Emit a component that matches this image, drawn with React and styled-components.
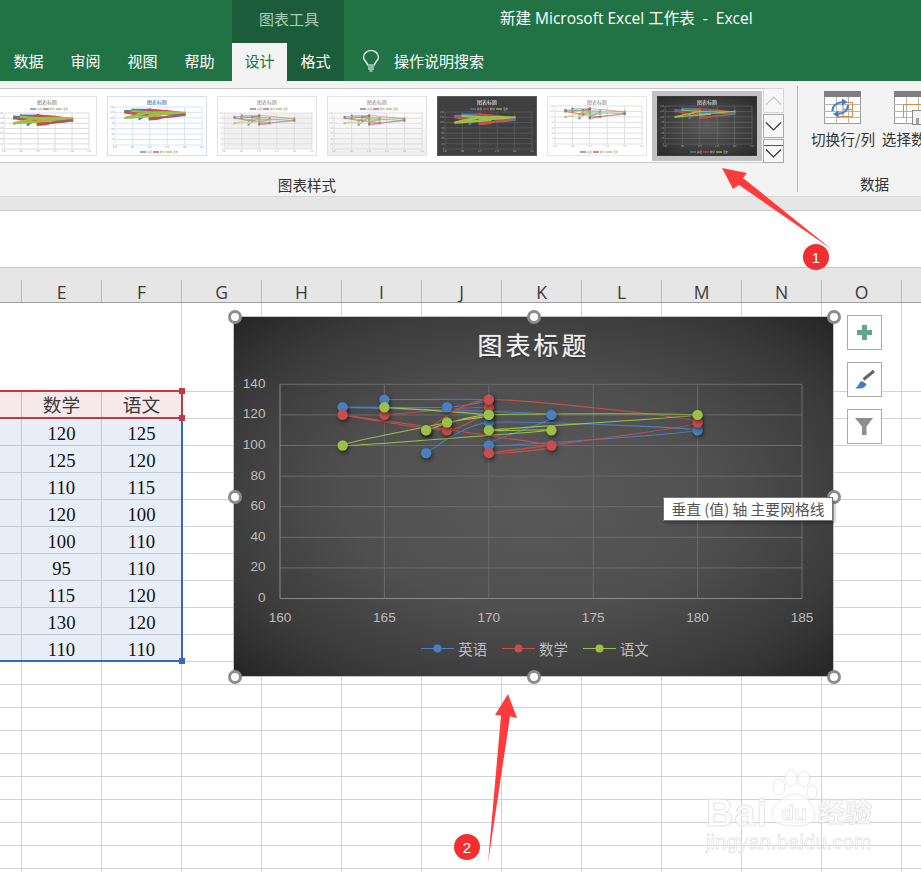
import React from 'react';
import styled, { createGlobalStyle } from 'styled-components';

const UI = '"Noto Sans CJK SC", "Noto Sans", sans-serif';
const LATIN_UI = '"Open Sans", "Noto Sans CJK SC", sans-serif';
const BLUE = '#4a7fc1';
const RED = '#c74e4b';
const GREEN = '#9cbf46';

const Global = createGlobalStyle`
  html, body { margin: 0; padding: 0; background: #fff; overflow: hidden; }
  * { box-sizing: border-box; }
`;

const Page = styled.div`
  position: relative; width: 921px; height: 872px; overflow: hidden;
  font-family: ${UI}; background: #fff;
`;

/* ---------- title bar and tabs ---------- */
const TitleBar = styled.header`
  display: flex; height: 43px; background: #217346; color: #fff;
`;
const TitleSpacer = styled.div`width: 232px;`;
const ContextTitle = styled.div`
  width: 112px; background: #1d5c3a; color: #a9cdb8; font-size: 15px; padding: 0 0 7px 2px;
  display: flex; align-items: center; justify-content: center;
`;
const DocTitle = styled.div`
  margin-left: 156px; font-size: 15.5px; line-height: 36px; white-space: pre;
  font-family: ${LATIN_UI};
`;
const TabBar = styled.nav`
  display: flex; height: 38px; background: #217346; align-items: stretch;
`;
const Tab = styled.div`
  width: ${p => p.$w}px; display: flex; align-items: center; justify-content: center; padding-bottom: 4px;
  font-size: 15px; color: ${p => (p.$active ? '#217346' : '#fff')};
  background: ${p => (p.$active ? '#f3f3f3' : p.$dark ? '#1d5c3a' : 'transparent')};
`;
const TabGap = styled.div`width: ${p => p.$w}px;`;
const Search = styled.div`
  display: flex; align-items: center; gap: 14px; margin-left: 18px; color: #fff; font-size: 15px;
  padding-bottom: 3px;
`;

/* ---------- ribbon ---------- */
const Ribbon = styled.section`
  display: flex; height: 116px; background: #f3f3f3; border-bottom: 1px solid #d6d6d6; overflow: hidden;
`;
const GalleryGroup = styled.div`
  flex: none; width: 980px; margin-left: -183px; padding: 7px 13px 0 0;
  display: flex; flex-direction: column; align-items: flex-end; position: relative;
`;
const GroupLabel = styled.div`
  font-size: 14.6px; color: #333; text-align: center; line-height: 20px;
`;
const GalleryLabel = styled(GroupLabel)`
  align-self: stretch; margin: 12px -13px 0 0;
`;
const GalleryRow = styled.div`
  display: flex; height: 75px;
`;
const Gallery = styled.div`
  display: flex; align-items: center; height: 75px; background: #fff;
  border: 1px solid #c8c8c8; border-right: none; padding-right: 1px; margin-left: -1px;
`;
const ThumbSlot = styled.div`
  width: 110px; height: 70px; padding: 5px; background: ${p => (p.$selected ? '#c2c2c2' : 'transparent')};
`;
const ThumbFrame = styled.div`
  width: 100px; height: 60px; overflow: hidden;
  border: 1px solid ${p => p.$border};
  background: ${p => p.$bg};
`;
const ThumbSvg = styled.svg`
  display: block; filter: blur(0.6px);
`;
const Scroller = styled.div`
  display: flex; flex-direction: column; width: 21px; height: 75px; gap: 1px;
`;
const ScrollBtn = styled.div`
  height: ${p => p.$h}px; border: 1px solid ${p => (p.$off ? '#d6d6d6' : '#a8a8a8')};
  background: #f7f7f7; display: flex; align-items: center; justify-content: center;
  flex-direction: column; gap: 3px;
`;
const MoreBar = styled.div`width: 19px; height: 1px; background: #555;`;

const DataGroup = styled.div`
  flex: none; width: 154px; margin: 5px 0 4px; border-left: 1px solid #b8b8b8;
  display: flex; flex-direction: column;
`;
const DataButtons = styled.div`display: flex; padding: 5px 0 0 12px; gap: 5px;`;
const DataButton = styled.div`
  width: ${p => p.$w}px; display: flex; flex-direction: column; align-items: center; gap: 3px;
  font-size: 14.6px; color: #333; white-space: nowrap; line-height: 22px;
`;
const IconSlot = styled.div`height: 34px; margin-left: ${p => p.$ml || 0}px;`;
const DataLabel = styled(GroupLabel)`margin-top: auto; margin-bottom: -2px;`;

const Band = styled.div`
  height: 14px; background: #e6e6e6; border-bottom: 1px solid #c9c9c9;
`;
const FormulaBar = styled.div`height: 56px; background: #fff;`;

/* ---------- sheet ---------- */
const ColHeader = styled.div`
  display: flex; align-items: flex-end; height: 36px; background: #e6e6e6;
  border-top: 1px solid #c6c6c6; border-bottom: 1px solid #9d9d9d;
`;
const ColCell = styled.div`
  flex: none; width: ${p => p.$w}px; height: 22px; border-right: 1px solid #b9b9b9;
  display: flex; align-items: center; justify-content: center; padding-top: 1px;
  font: 400 17.5px "Open Sans", sans-serif; color: #3a3a3a;
`;
const Sheet = styled.div`position: relative;`;
const Row = styled.div`
  display: flex; height: ${p => p.$h}px;
`;
const Cell = styled.div`
  flex: none; width: ${p => p.$w}px; height: 100%; padding-top: ${p => (p.$fill ? 3 : 0)}px;
  border-right: 1px solid ${p => (p.$fill ? '#c3c9d3' : '#d2d2d2')};
  border-bottom: 1px solid ${p => (p.$fill ? '#c3c9d3' : '#d2d2d2')};
  background: ${p => p.$fill || '#fff'};
  display: flex; align-items: center; justify-content: center; overflow: hidden;
  font: 18.7px "Liberation Serif", "Noto Sans CJK SC", serif; color: #111;
`;
const HeadCell = styled(Cell)`
  color: #3a3a3a; border-color: #cdbdbd; padding-top: 0; padding-bottom: 4px;
`;
const ClippedHead = styled(HeadCell)`
  justify-content: flex-end; padding-right: 21px; white-space: nowrap;
`;
const Merged = styled.div`
  flex: none; width: ${p => p.$w}px; height: 100%;
  border-right: 1px solid #d2d2d2; border-bottom: 1px solid #d2d2d2; background: #fff;
`;
const RangeLine = styled.div`
  position: absolute; background: ${p => p.$c};
  left: ${p => p.$x}px; top: ${p => p.$y}px; width: ${p => p.$w}px; height: ${p => p.$h}px;
`;
const RangeHandle = styled.div`
  position: absolute; width: 6px; height: 6px; background: ${p => p.$c};
  left: 179px; top: ${p => p.$y}px;
`;

/* ---------- chart ---------- */
const Chart = styled.div`
  position: absolute; left: 233px; top: 13px; width: 601px; height: 361px;
  border: 1px solid #c4c4c4; display: flex; flex-direction: column;
  background: radial-gradient(ellipse at center, #5a5a5a 0%, #4f4f4f 45%, #3a3a3a 78%, #252525 100%);
`;
const ChartTitle = styled.div`
  height: 60px; display: flex; align-items: center; justify-content: center; padding: 0 0 6px 0;
  font-size: 25px; letter-spacing: 3px; color: #f0f0f0;
  text-shadow: 0 1px 2px rgba(0,0,0,.6), 0 0 1px #fff;
`;
const Plot = styled.svg`display: block; flex: none;`;
const Legend = styled.div`
  height: 28px; display: flex; align-items: center; justify-content: center; gap: 15px;
  font-size: 14.4px; color: #bdbdbd; padding: 0 0 2px 3px;
`;
const LegendItem = styled.div`display: flex; align-items: center; gap: 4px;`;
const Marker = styled.circle`
  filter: drop-shadow(1px 2px 2px rgba(0,0,0,.55));
`;
const AxisText = styled.text`
  font: 13.6px "Liberation Sans", sans-serif; fill: #bdbdbd;
`;
const Handle = styled.div`
  position: absolute; width: 14px; height: 14px; border-radius: 50%;
  background: #fff; border: 3px solid #8c8c8c;
  left: ${p => p.$x - 7}px; top: ${p => p.$y - 303 - 7}px;
`;
const SideButtons = styled.div`
  position: absolute; left: 847px; top: 12px; display: flex; flex-direction: column; gap: 12px;
`;
const SideButton = styled.div`
  width: 35px; height: 35px; background: #fff; border: 1px solid #ababab;
  display: flex; align-items: center; justify-content: center;
`;
const Tooltip = styled.div`
  position: absolute; left: 663px; top: 194px; width: 170px; height: 24px; padding-bottom: 2px;
  background: #fff; border: 1px solid #767676; box-shadow: 2px 2px 3px rgba(0,0,0,.3);
  font-size: 14.8px; color: #555; display: flex; align-items: center; justify-content: center;
  white-space: nowrap;
`;

/* ---------- overlays ---------- */
const Annotations = styled.svg`
  position: absolute; left: 0; top: 0; pointer-events: none;
`;
const BadgeText = styled.text`
  font: 15px "Liberation Sans", sans-serif; fill: #fff; text-anchor: middle;
`;
const Watermark = styled.div`
  position: absolute; left: 706px; top: 770px; width: 166px; display: flex; flex-direction: column;
  align-items: stretch; opacity: .72;
`;
const MarkRow = styled.div`display: flex; align-items: flex-end; height: 58px;`;
const MarkText = styled.span`
  font: 700 ${p => p.$s}px/30px "Liberation Sans", "Noto Sans CJK SC", sans-serif;
  color: #fff; -webkit-text-stroke: 1px #dadada; white-space: nowrap; letter-spacing: ${p => p.$ls || 0}px;
`;
const MarkDomain = styled.div`
  font: 400 20.5px/24px "Liberation Sans", sans-serif; color: #fff; -webkit-text-stroke: 0.8px #dadada;
  white-space: nowrap; margin-top: 2px;
`;

/* ---------- data ---------- */
const XS = [165, 170, 168, 163, 173, 170, 180, 170, 167];
const SERIES = [
  { name: '英语', color: BLUE, ys: [130, 130, 125, 125, 120, 100, 110, 115, 95] },
  { name: '数学', color: RED, ys: [120, 125, 110, 120, 100, 95, 115, 130, 110] },
  { name: '语文', color: GREEN, ys: [125, 120, 115, 100, 110, 110, 120, 120, 110] },
];
const TABLE = SERIES[1].ys.map((m, i) => [m, SERIES[2].ys[i]]);

function spline(pts) {
  const K = 1 / 10;
  let d = `M${pts[0][0]} ${pts[0][1]}`;
  for (let i = 0; i < pts.length - 1; i++) {
    const p0 = pts[Math.max(i - 1, 0)], p1 = pts[i], p2 = pts[i + 1], p3 = pts[Math.min(i + 2, pts.length - 1)];
    d += `C${p1[0] + (p2[0] - p0[0]) * K} ${p1[1] + (p2[1] - p0[1]) * K} ${p2[0] - (p3[0] - p1[0]) * K} ${p2[1] - (p3[1] - p1[1]) * K} ${p2[0]} ${p2[1]}`;
  }
  return d;
}

const THUMBS = [
  { bg: '#fff', border: '#e4e4e4', title: '#777', legend: 'top', plot: [7, 17, 92, 53], grid: '#dcdcdc', gw: 1, lw: 2.2, ms: 2.4, mo: 1, axis: '#999' },
  { bg: '#fff', border: '#d0e0f4', title: '#2f5f9e', legend: 'bottom', plot: [8, 11, 95, 49], grid: '#d5e4f6', gw: 1, lw: 2, ms: 2, mo: 1, axis: '#6d93c8' },
  { bg: '#fff', border: '#e2e2e2', title: '#8a8a8a', legend: 'top', plot: [7, 17, 95, 53], grid: '#dcdcdc', gw: .8, lw: .6, ms: 2, mo: .75, plotBg: '#f0f0f0', axis: '#aaa' },
  { bg: 'linear-gradient(#fff,#efefef)', border: '#e2e2e2', title: '#8a8a8a', legend: 'top', plot: [7, 17, 95, 53], grid: '#dcdcdc', gw: .9, lw: .6, ms: 2, mo: .8, axis: '#aaa' },
  { bg: '#404040', border: '#5a5a5a', title: '#e8e8e8', legend: 'top', plot: [8, 16, 95, 53], grid: '#5f5f5f', gw: .7, lw: 2.2, ms: 2, mo: 1, axis: '#aaa' },
  { bg: '#fff', border: '#e6e6e6', title: '#888', legend: 'bottom', plot: [8, 10, 95, 48], grid: '#e0e0e0', gw: 1, lw: .6, ms: 2.2, mo: .85, axis: '#aaa' },
  { bg: 'radial-gradient(ellipse at center,#5a5a5a,#2a2a2a)', border: '#3a3a3a', title: '#e8e8e8', legend: 'bottom', plot: [8, 10, 95, 48], grid: '#777', gw: .5, lw: 1.2, ms: 1.8, mo: 1, axis: '#aaa' },
];

function ThumbChart({ v }) {
  const [x0, y0, x1, y1] = v.plot;
  const sx = x => x0 + ((x - 160) / 25) * (x1 - x0);
  const sy = y => y1 - (y / 140) * (y1 - y0);
  const legendY = v.legend === 'top' ? 13 : 56;
  const isDark = v.title === '#e8e8e8';
  return (
    <ThumbFrame $bg={v.bg} $border={v.border}>
      <ThumbSvg width="98" height="58" viewBox="1 1 98 58">
        <text x="50" y="8" fontSize="5" fill={v.title} textAnchor="middle" fontFamily={UI}>图表标题</text>
        {SERIES.map((s, i) => (
          <g key={s.name}>
            <line x1={33 + i * 13} x2={39 + i * 13} y1={legendY} y2={legendY} stroke={s.color} strokeWidth="1.3" />
            <text x={40 + i * 13} y={legendY + 1} fontSize="2.6" fill={isDark ? '#ccc' : '#888'} fontFamily={UI}>{s.name}</text>
          </g>
        ))}
        {v.plotBg && <rect x={x0} y={y0} width={x1 - x0} height={y1 - y0} fill={v.plotBg} />}
        {[0, 20, 40, 60, 80, 100, 120, 140].map(t => (
          <g key={t}>
            <line x1={x0} x2={x1} y1={sy(t)} y2={sy(t)} stroke={v.grid} strokeWidth={v.gw} />
            <text x={x0 - 1} y={sy(t) + .8} fontSize="2.2" textAnchor="end" fill={v.axis}>{t}</text>
          </g>
        ))}
        {[160, 165, 170, 175, 180, 185].map(t => (
          <g key={t}>
            <line x1={sx(t)} x2={sx(t)} y1={y0} y2={y1} stroke={v.grid} strokeWidth={v.gw} />
            <text x={sx(t)} y={y1 + 3.4} fontSize="2.2" textAnchor="middle" fill={v.axis}>{t}</text>
          </g>
        ))}
        {SERIES.map(s => (
          <g key={s.name} opacity={v.mo}>
            <path d={spline(XS.map((x, i) => [sx(x), sy(s.ys[i])]))} fill="none" stroke={s.color} strokeWidth={v.lw} />
            {XS.map((x, i) => (
              <rect key={i} x={sx(x) - v.ms / 2} y={sy(s.ys[i]) - v.ms / 2} width={v.ms} height={v.ms} fill={s.color} />
            ))}
          </g>
        ))}
      </ThumbSvg>
    </ThumbFrame>
  );
}

const Chevron = ({ color, up }) => (
  <svg width="17" height="9" viewBox="0 0 17 9">
    <polyline points={up ? '1,8.5 8.5,1 16,8.5' : '1,.5 8.5,8 16,.5'} fill="none" stroke={color} strokeWidth="1.2" />
  </svg>
);

const SwitchIcon = () => (
  <svg width="38" height="34" viewBox="0 0 38 34">
    <rect x=".5" y=".5" width="36" height="32" fill="#fff" stroke="#999" />
    <rect x="0" y="0" width="37" height="6" fill="#7f7f7f" />
    <path d="M12.5 6V33M24.5 6V33M0 13.5H37M0 20.5H37M0 26.5H37" stroke="#b4b4b4" fill="none" />
    <path d="M19 11.5H28.5V25.5H13M19 11.5V25.5M19 18.5H28.5" stroke="#e08a3c" fill="none" strokeWidth="1.1" />
    <path d="M8.5 20C8.5 15 12.5 11.5 19 11" stroke="#3f7fc4" strokeWidth="2.2" fill="none" />
    <path d="M18 7.5L23.5 11L18 14.5Z" fill="#3f7fc4" />
    <path d="M24 14C24 19 20 22.5 13.5 23" stroke="#3f7fc4" strokeWidth="2.2" fill="none" />
    <path d="M14.5 19.5L9 23L14.5 26.5Z" fill="#3f7fc4" />
  </svg>
);

const SelectIcon = () => (
  <svg width="38" height="34" viewBox="0 0 38 34">
    <rect x=".5" y=".5" width="36" height="32" fill="#fff" stroke="#999" />
    <rect x="0" y="0" width="37" height="6" fill="#7f7f7f" />
    <path d="M12.5 6V33M24.5 6V33M0 13.5H37M0 20.5H37M0 26.5H37" stroke="#b4b4b4" fill="none" />
    <path d="M9.5 13.5H30V20.5M9.5 13.5V26" stroke="#e08a3c" fill="none" strokeWidth="1.1" />
    <rect x="18.5" y="19.5" width="19" height="14" fill="#f3f3f3" stroke="#8a8a8a" />
    <path d="M22 33V27H25V33ZM27 33V23H30V33ZM32 33V25H35V33Z" fill="#a0a0a0" />
  </svg>
);

const Bulb = () => (
  <svg width="18" height="22" viewBox="0 0 18 22" fill="none" stroke="#fff" strokeWidth="1.2">
    <path d="M5.5 15C5.5 12 1.5 10.5 1.5 7.5A7.5 7 0 0 1 16.5 7.5C16.5 10.5 12.5 12 12.5 15Z" />
    <path d="M6 17H12M6 19H12M7.5 21H10.5" />
  </svg>
);

const LegendMark = ({ color }) => (
  <svg width="33" height="11" viewBox="0 0 33 11">
    <line x1="0" x2="33" y1="5.5" y2="5.5" stroke={color} strokeWidth="1.1" />
    <circle cx="16.5" cy="5.5" r="4" fill={color} />
  </svg>
);

function BigPlot() {
  const sx = x => 280 + ((x - 160) / 25) * 522;
  const sy = y => 598.5 - (y / 140) * 214.2;
  return (
    <Plot width="599" height="258" viewBox="234 377 599 258">
      {[0, 20, 40, 60, 80, 100, 120, 140].map(t => (
        <g key={t}>
          <line x1="280" x2="802" y1={sy(t)} y2={sy(t)} stroke={t === 0 ? '#8a8a8a' : '#6c6c6c'} />
          <AxisText x="265.5" y={sy(t) + 3.5} textAnchor="end">{t}</AxisText>
        </g>
      ))}
      {[160, 165, 170, 175, 180, 185].map(t => (
        <g key={t}>
          <line x1={sx(t)} x2={sx(t)} y1="384.3" y2="598.5" stroke={t === 160 ? '#8a8a8a' : '#6c6c6c'} />
          <AxisText x={sx(t)} y="622" textAnchor="middle">{t}</AxisText>
        </g>
      ))}
      {SERIES.map(s => (
        <path key={s.name} d={spline(XS.map((x, i) => [sx(x), sy(s.ys[i])]))} fill="none" stroke={s.color} strokeWidth="1.1" />
      ))}
      {SERIES.map(s => XS.map((x, i) => (
        <Marker key={s.name + i} cx={sx(x)} cy={sy(s.ys[i])} r="5.2" fill={s.color} />
      )))}
    </Plot>
  );
}

const HANDLES = [[234.5, 316.5], [534, 316.5], [834, 316.5], [234.5, 496.5], [834, 496.5], [234.5, 676.5], [534, 676.5], [834, 676.5]];
const COLS = ['', 'E', 'F', 'G', 'H', 'I', 'J', 'K', 'L', 'M', 'N', 'O', ''];
const widthOf = i => (i === 0 ? 22 : 80);
const EMPTY_ROWS = Array.from({ length: 10 });

const PlainCells = ({ from = 0 }) => COLS.slice(from).map((_, i) => <Cell key={i} $w={widthOf(i + from)} />);

export default function App() {
  return (
    <Page>
      <Global />
      <TitleBar>
        <TitleSpacer />
        <ContextTitle>图表工具</ContextTitle>
        <DocTitle>新建 Microsoft Excel 工作表  -  Excel</DocTitle>
      </TitleBar>
      <TabBar>
        <Tab $w={57}>数据</Tab>
        <Tab $w={57}>审阅</Tab>
        <Tab $w={57}>视图</Tab>
        <Tab $w={57}>帮助</Tab>
        <TabGap $w={4} />
        <Tab $w={55} $active>设计</Tab>
        <Tab $w={57} $dark>格式</Tab>
        <Search><Bulb />操作说明搜索</Search>
      </TabBar>
      <Ribbon>
        <GalleryGroup>
          <GalleryRow>
            <Gallery>
              {THUMBS.map((t, i) => (
                <ThumbSlot key={i} $selected={i === 6}><ThumbChart v={t} /></ThumbSlot>
              ))}
            </Gallery>
            <Scroller>
              <ScrollBtn $h={25} $off><Chevron color="#c8c8c8" up /></ScrollBtn>
              <ScrollBtn $h={24}><Chevron color="#333" /></ScrollBtn>
              <ScrollBtn $h={24}><MoreBar /><Chevron color="#333" /></ScrollBtn>
            </Scroller>
          </GalleryRow>
          <GalleryLabel>图表样式</GalleryLabel>
        </GalleryGroup>
        <DataGroup>
          <DataButtons>
            <DataButton $w={66}><IconSlot><SwitchIcon /></IconSlot>切换行/列</DataButton>
            <DataButton $w={60}><IconSlot $ml={3}><SelectIcon /></IconSlot>选择数据</DataButton>
          </DataButtons>
          <DataLabel>数据</DataLabel>
        </DataGroup>
      </Ribbon>
      <Band />
      <FormulaBar />
      <ColHeader>
        {COLS.map((c, i) => <ColCell key={i} $w={widthOf(i)}>{c}</ColCell>)}
      </ColHeader>
      <Sheet>
        <Row $h={89}>
          <Merged $w={182} />
          <PlainCells from={3} />
        </Row>
        <Row $h={27}>
          <ClippedHead $w={22} $fill="#f7e9e9">英语</ClippedHead>
          <HeadCell $w={80} $fill="#f7e9e9">数学</HeadCell>
          <HeadCell $w={80} $fill="#f7e9e9">语文</HeadCell>
          <PlainCells from={3} />
        </Row>
        {TABLE.map((r, i) => (
          <Row $h={27} key={i}>
            <Cell $w={22} $fill="#e7eef8" />
            <Cell $w={80} $fill="#e7eef8">{r[0]}</Cell>
            <Cell $w={80} $fill="#e7eef8">{r[1]}</Cell>
            <PlainCells from={3} />
          </Row>
        ))}
        {EMPTY_ROWS.map((_, i) => (
          <Row $h={23} key={i}><PlainCells /></Row>
        ))}

        <RangeLine $c="#bf3a45" $x={0} $y={87} $w={183} $h={2} />
        <RangeLine $c="#bf3a45" $x={0} $y={114} $w={183} $h={2} />
        <RangeLine $c="#bf3a45" $x={181} $y={87} $w={2} $h={29} />
        <RangeLine $c="#3568c6" $x={181} $y={116} $w={2} $h={243} />
        <RangeLine $c="#3568c6" $x={0} $y={357} $w={183} $h={2} />
        <RangeHandle $c="#bf3a45" $y={85} />
        <RangeHandle $c="#bf3a45" $y={112} />
        <RangeHandle $c="#3568c6" $y={355} />

        <Chart>
          <ChartTitle>图表标题</ChartTitle>
          <BigPlot />
          <Legend>
            {SERIES.map(s => (
              <LegendItem key={s.name}><LegendMark color={s.color} />{s.name}</LegendItem>
            ))}
          </Legend>
        </Chart>
        {HANDLES.map(([x, y]) => <Handle key={`${x}-${y}`} $x={x} $y={y} />)}
        <SideButtons>
          <SideButton>
            <svg width="17" height="17" viewBox="0 0 17 17"><path d="M6 1H11V6H16V11H11V16H6V11H1V6H6Z" fill="#5fa78f" /></svg>
          </SideButton>
          <SideButton>
            <svg width="33" height="33" viewBox="0 0 33 33">
              <path d="M26 8L15.5 16.5" stroke="#666" strokeWidth="3" />
              <path d="M7 25C11 24 10 19.5 14 18L18.5 21C17.5 25 12 26.5 7 25Z" fill="#3f7fc4" />
            </svg>
          </SideButton>
          <SideButton>
            <svg width="33" height="33" viewBox="0 0 33 33">
              <path d="M7 8H25L18.5 16.5V25H14V16.5Z" fill="#8e8e8e" />
            </svg>
          </SideButton>
        </SideButtons>
        <Tooltip>垂直 (值) 轴 主要网格线</Tooltip>
      </Sheet>
      <Watermark>
        <MarkRow>
          <MarkText $s={38} $ls={1}>Bai</MarkText>
          <svg width="50" height="58" viewBox="0 0 50 58">
            <g fill="#fff" stroke="#dedede" strokeWidth="1">
              <ellipse cx="11" cy="17" rx="6" ry="8" />
              <ellipse cx="23" cy="8" rx="6" ry="8" />
              <ellipse cx="36" cy="9" rx="6" ry="8" />
              <ellipse cx="44" cy="22" rx="5" ry="7" />
              <path d="M27 24C38 24 47 36 47 45C47 53 40 56 27 56C12 56 4 52 4 45C4 36 16 24 27 24Z" />
            </g>
            <text x="26" y="50" fontSize="21" fontWeight="700" fontFamily="Liberation Sans" fill="#fff" stroke="#dadada" strokeWidth=".8" textAnchor="middle">du</text>
          </svg>
          <MarkText $s={27}>经验</MarkText>
        </MarkRow>
        <MarkDomain>jingyan.baidu.com</MarkDomain>
      </Watermark>
      <Annotations width="921" height="872" viewBox="0 0 921 872">
        <path d="M722 168L747 173L743 178L832 249.5L739 185L733 189Z" fill="#ff3b3b" />
        <circle cx="816" cy="257" r="13" fill="#f03030" />
        <BadgeText x="816" y="262.5">1</BadgeText>
        <path d="M508 694L517 718L510 716.5L488 863L501 715.5L495 715Z" fill="#ff3b3b" />
        <circle cx="467" cy="847" r="13" fill="#f03030" />
        <BadgeText x="467" y="852.5">2</BadgeText>
      </Annotations>
    </Page>
  );
}
